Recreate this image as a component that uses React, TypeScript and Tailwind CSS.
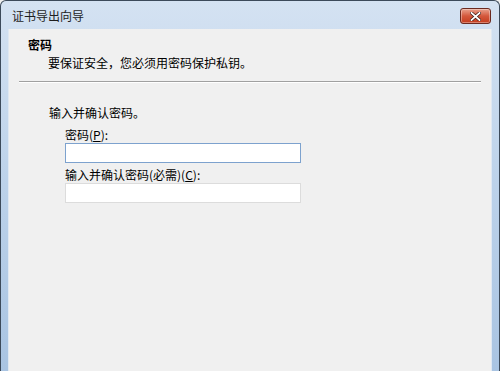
export default function App() {
  const font = { fontFamily: '"Noto Sans CJK SC", "Liberation Sans", sans-serif' }
  return (
    <div
      className="w-[500px] h-[371px] overflow-hidden bg-[#f0f0f0]"
      style={font}
    >
      <div className="w-[500px] h-[371px] flex flex-col rounded-t-[6px] border border-b-0 border-[#3c4a5a] bg-gradient-to-b from-[#d4e2f2] via-[#bcd2ea] to-[#a9c4e2] overflow-hidden">
        {/* title bar */}
        <div className="h-[28px] flex items-center justify-between pl-[11px] pr-[8px] shrink-0">
          <span className="text-[12px] text-[#1e1e1e] leading-none pt-[2px]">证书导出向导</span>
          <button className="w-[31px] h-[16px] mt-[2px] rounded-[3px] border border-[#6b2a20] bg-gradient-to-b from-[#e8a08c] via-[#d4583c] to-[#c43c1c] flex items-center justify-center shadow-[inset_0_0_0_1px_rgba(255,255,255,0.35)]">
            <svg width="11" height="9" viewBox="0 0 11 9">
              <path d="M1.5 1 L9.5 8 M9.5 1 L1.5 8" stroke="#3a1a14" strokeWidth="3.2" strokeLinecap="square" />
              <path d="M1.5 1 L9.5 8 M9.5 1 L1.5 8" stroke="#ffffff" strokeWidth="1.8" strokeLinecap="square" />
            </svg>
          </button>
        </div>
        {/* body with frame sides */}
        <div className="flex-1 flex px-[7px]">
          <div className="flex-1 bg-[#f0f0f0] border-l border-r border-[#dfe8f2] flex flex-col">
            {/* header */}
            <div className="h-[52px] pl-[19px] pt-[8px] flex flex-col">
              <span className="text-[12px] font-bold text-black leading-[16px]">密码</span>
              <span className="text-[12px] text-black leading-[16px] pl-[20px] mt-[2px]">要保证安全，您必须用密码保护私钥。</span>
            </div>
            <div className="mx-[10px] border-t border-[#a0a0a0] border-b border-b-white" />
            {/* content */}
            <div className="pl-[40px] pt-[22px] flex flex-col">
              <span className="text-[12px] text-black leading-[16px]">输入并确认密码。</span>
              <div className="pl-[16px] mt-[6px] flex flex-col">
                <span className="text-[12px] text-black leading-[16px]">密码(<u>P</u>):</span>
                <input
                  type="password"
                  className="w-[236px] h-[20px] bg-white border border-[#7da2ce] outline-none"
                />
                <span className="text-[12px] text-black leading-[16px] mt-[4px]">输入并确认密码(必需)(<u>C</u>):</span>
                <input
                  type="password"
                  className="w-[236px] h-[20px] bg-white border border-[#dcdcdc] outline-none"
                />
              </div>
            </div>
          </div>
        </div>
      </div>
    </div>
  )
}
